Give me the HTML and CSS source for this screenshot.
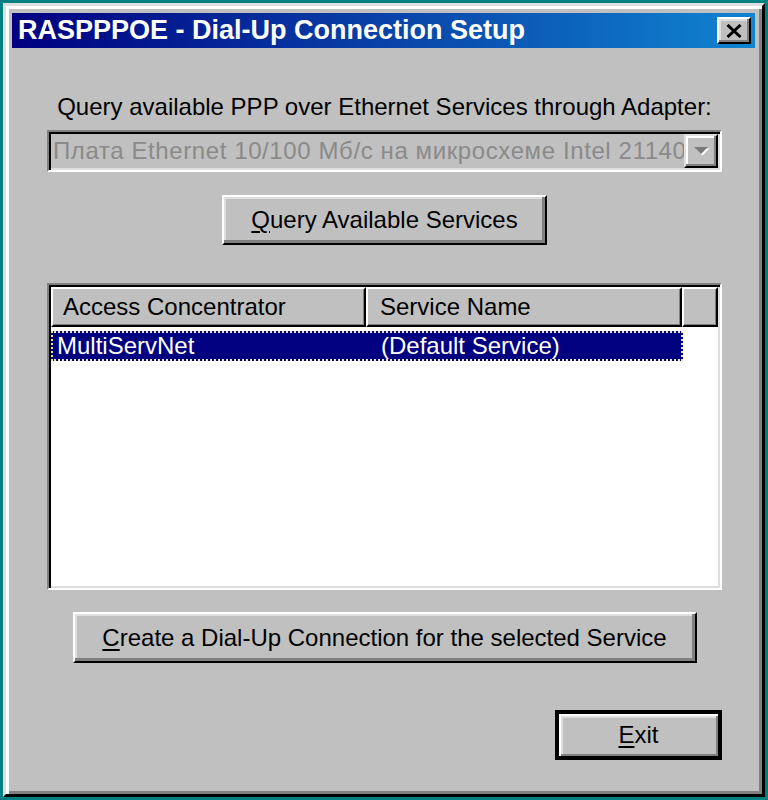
FILE: index.html
```html
<!DOCTYPE html>
<html>
<head>
<meta charset="utf-8">
<title>RASPPPOE - Dial-Up Connection Setup</title>
<link rel="stylesheet" href="styles.css">
</head>
<body>
<div class="window">
  <div class="titlebar">
    <span class="title">RASPPPOE - Dial-Up Connection Setup</span>
    <div class="close">
      <svg width="16" height="14" viewBox="0 0 16 14"><path d="M1.5 1 L14.5 13 M14.5 1 L1.5 13" stroke="#000" stroke-width="3" fill="none"/></svg>
    </div>
  </div>
  <div class="content">
    <div class="label">Query available PPP over Ethernet Services through Adapter:</div>
    <div class="combo">
      <div class="combo-text">Плата Ethernet 10/100 Мб/с на микросхеме Intel 21140</div>
      <div class="combo-btn">
        <svg width="18" height="12" viewBox="0 0 18 12"><path d="M2 2 L16 2 L9 9 Z" fill="#fff" transform="translate(1.5 1.5)"/><path d="M2 2 L16 2 L9 9 Z" fill="#7a7a7a"/></svg>
      </div>
    </div>
    <div class="btn btn-query"><span><u>Q</u>uery Available Services</span></div>
    <div class="list">
      <div class="list-header">
        <div class="hcell c1">Access Concentrator</div>
        <div class="hcell c2">Service Name</div>
        <div class="hcell c3"></div>
      </div>
      <div class="row selected">
        <span class="cell c1">MultiServNet</span>
        <span class="cell c2">(Default Service)</span>
      </div>
    </div>
    <div class="btn btn-create"><span><u>C</u>reate a Dial-Up Connection for the selected Service</span></div>
    <div class="footer">
      <div class="btn btn-exit"><span><u>E</u>xit</span></div>
    </div>
  </div>
</div>
</body>
</html>
```
FILE: styles.css
```css
html, body {
  margin: 0;
  padding: 0;
}
body {
  background: #008080;
  width: 768px;
  height: 800px;
  overflow: hidden;
  font-family: "Liberation Sans", Arial, sans-serif;
  font-size: 24px;
  color: #000;
}
.window {
  margin: 3px;
  width: 762px;
  height: 794px;
  box-sizing: border-box;
  background: #c0c0c0;
  border: 3px solid;
  border-color: #dfdfdf #000 #000 #dfdfdf;
  box-shadow: inset 3px 3px #fff, inset -3px -3px #808080;
  padding: 7px 7px 0 6px;
}
.titlebar {
  height: 35px;
  display: flex;
  align-items: center;
  padding-left: 6px;
  background: linear-gradient(to right, #000080, #1084d0);
}
.title {
  color: #fff;
  font-weight: bold;
  font-size: 27px;
  line-height: 35px;
  white-space: nowrap;
}
.close {
  margin-left: auto;
  margin-right: 4px;
  width: 34px;
  height: 27px;
  box-sizing: border-box;
  background: #c0c0c0;
  border: 2px solid;
  border-color: #fff #000 #000 #fff;
  box-shadow: inset -2px -2px #808080, inset 2px 2px #dfdfdf;
  display: flex;
  align-items: center;
  justify-content: center;
}
.content {
  margin-left: 35px;
  width: 675px;
  display: flex;
  flex-direction: column;
  align-items: center;
}
.label {
  margin-top: 45px;
  line-height: 28px;
  white-space: nowrap;
  text-align: center;
}
.combo {
  margin-top: 9px;
  width: 675px;
  height: 42px;
  box-sizing: border-box;
  border: 2px solid;
  border-color: #808080 #fff #fff #808080;
  box-shadow: inset 2px 2px #000, inset -2px -2px #dfdfdf;
  padding: 2px;
  display: flex;
  background: #c0c0c0;
}
.combo-text {
  flex: 1;
  overflow: hidden;
  white-space: nowrap;
  color: #8a8a8a;
  line-height: 34px;
  padding-left: 2px;
  letter-spacing: 0.6px;
}
.combo-btn {
  width: 34px;
  height: 34px;
  flex: none;
  box-sizing: border-box;
  border: 2px solid;
  border-color: #dfdfdf #000 #000 #dfdfdf;
  box-shadow: inset -2px -2px #808080, inset 2px 2px #fff;
  background: #c0c0c0;
  display: flex;
  align-items: center;
  justify-content: center;
}
.btn {
  box-sizing: border-box;
  background: #c0c0c0;
  border: 2px solid;
  border-color: #fff #000 #000 #fff;
  box-shadow: inset -3px -3px #808080, inset 2px 2px #dfdfdf;
  display: flex;
  align-items: center;
  justify-content: center;
  white-space: nowrap;
}
.btn u {
  text-decoration-thickness: 2px;
  text-underline-offset: 3px;
}
.btn-query {
  margin-top: 23px;
  width: 325px;
  height: 50px;
}
.list {
  margin-top: 38px;
  width: 675px;
  height: 307px;
  box-sizing: border-box;
  border: 2px solid;
  border-color: #808080 #fff #fff #808080;
  box-shadow: inset 2px 2px #000, inset -2px -2px #dfdfdf;
  padding: 2px;
  background: #fff;
}
.list-header {
  display: flex;
  height: 40px;
}
.hcell {
  box-sizing: border-box;
  height: 40px;
  background: #c0c0c0;
  border: 2px solid;
  border-color: #fff #000 #000 #fff;
  box-shadow: inset -1px -1px #808080;
  line-height: 36px;
  white-space: nowrap;
  overflow: hidden;
}
.hcell.c1 {
  width: 315px;
  padding-left: 10px;
}
.hcell.c2 {
  width: 316px;
  padding-left: 12px;
}
.hcell.c3 {
  flex: 1;
}
.row {
  display: flex;
  margin-top: 4px;
  width: 632px;
  height: 30px;
  box-sizing: border-box;
}
.row.selected {
  background: #000080;
  color: #fff;
  border: 2px dotted #e8e8b0;
}
.cell {
  line-height: 26px;
  white-space: nowrap;
}
.cell.c1 {
  width: 320px;
  padding-left: 4px;
  box-sizing: border-box;
}
.cell.c2 {
  padding-left: 8px;
}
.btn-create {
  margin-top: 22px;
  width: 624px;
  height: 51px;
}
.footer {
  width: 675px;
  display: flex;
  justify-content: flex-end;
  margin-top: 47px;
}
.btn-exit {
  width: 167px;
  height: 50px;
  border: 4px solid #000;
  box-shadow: inset 2px 2px #fff, inset -2px -2px #808080, inset 4px 4px #dfdfdf;
}
```
